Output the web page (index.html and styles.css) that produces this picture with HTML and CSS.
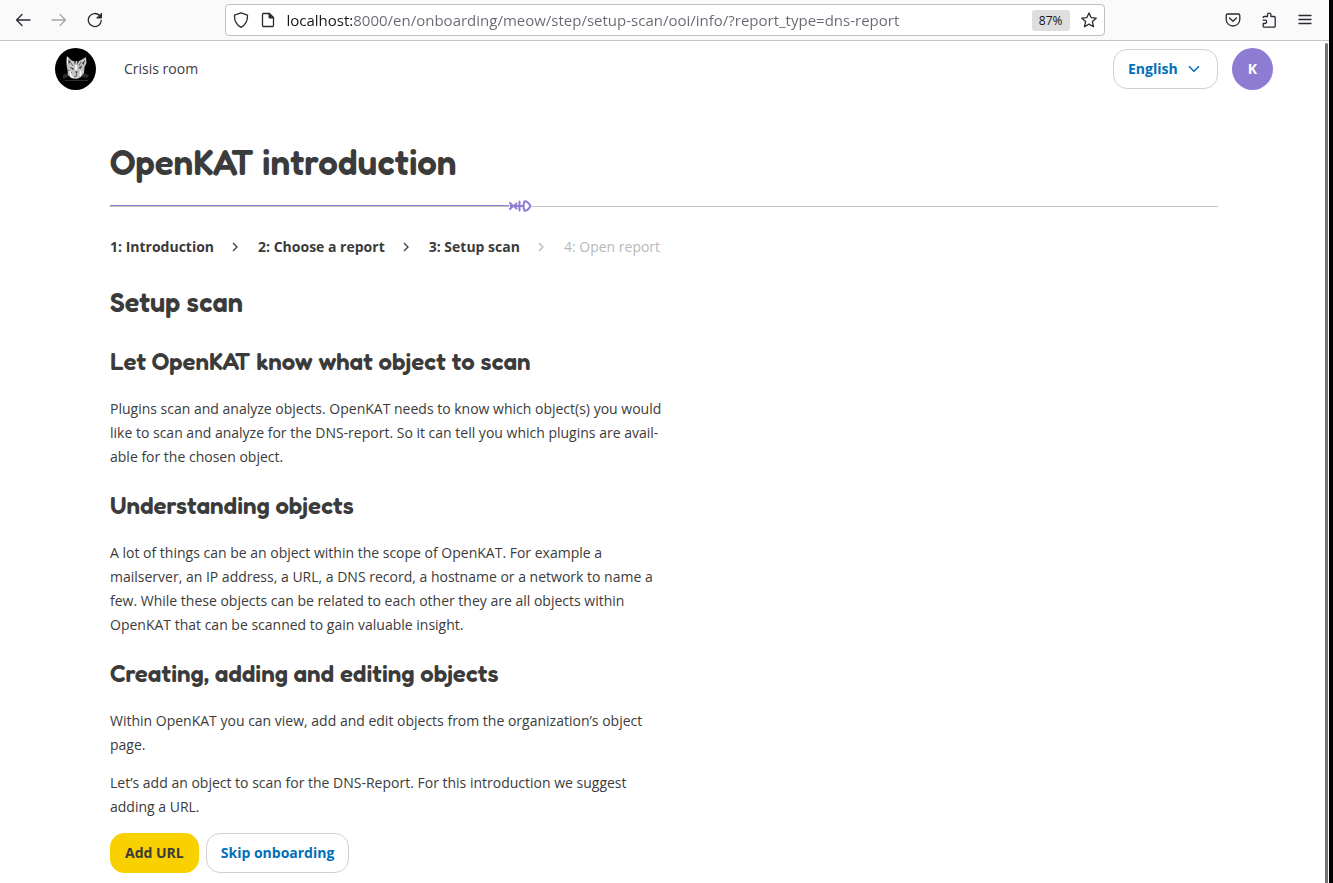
FILE: index.html
```html
<!DOCTYPE html>
<html lang="en">
<head>
<meta charset="utf-8">
<title>OpenKAT introduction</title>
<link rel="stylesheet" href="styles.css">
</head>
<body>
<div class="window">
  <div class="toolbar">
    <div class="nav-buttons">
      <button class="icon-button" aria-label="Back"><svg width="16" height="16" viewBox="0 0 16 16"><path d="M15 8H1.5M7 2.5L1.5 8L7 13.5"/></svg></button>
      <button class="icon-button faded" aria-label="Forward"><svg width="16" height="16" viewBox="0 0 16 16"><path d="M1 8h13.500M9 2.500L14.500 8L9 13.500"/></svg></button>
      <button class="icon-button" aria-label="Reload"><svg width="16" height="16" viewBox="0 0 16 16"><path d="M14.300 8.500A6.500 6.500 0 1 1 12.500 3.500"/><path class="solid" d="M14.500 1.500v4.500H10z"/></svg></button>
    </div>
    <div class="address">
      <svg width="16" height="16" viewBox="0 0 16 16"><path d="M8 .9L14.500 3.200C14.700 8.500 12.500 13 8 15.300C3.500 13 1.300 8.500 1.500 3.200Z"/></svg>
      <svg width="16" height="16" viewBox="0 0 16 16"><path d="M3.500 1.500h6l4 4v8a1 1 0 0 1-1 1h-9a1 1 0 0 1-1-1v-11a1 1 0 0 1 1-1z"/><path class="solid" d="M9 1.500v4.500h4.500z"/></svg>
      <input class="url" type="text" aria-label="Address" value="localhost:8000/en/onboarding/meow/step/setup-scan/ooi/info/?report_type=dns-report">
      <button class="zoom-level">87%</button>
      <button class="icon-button" aria-label="Bookmark"><svg width="16" height="16" viewBox="0 0 16 16"><path d="M8 .9l2.100 4.700 5.100.6-3.800 3.400 1.100 5.100L8 12.100l-4.500 2.600 1.100-5.100L.8 6.200l5.100-.6z"/></svg></button>
    </div>
    <div class="tools">
      <button class="icon-button" aria-label="Save to Pocket"><svg width="16" height="16" viewBox="0 0 16 16"><path d="M2.700 2h10.600a1.500 1.500 0 0 1 1.500 1.500V7.500a6.800 6.500 0 0 1-13.600 0V3.500A1.500 1.500 0 0 1 2.700 2zM4.500 6L8 9.300L11.500 6"/></svg></button>
      <button class="icon-button" aria-label="Extensions"><svg width="16" height="16" viewBox="0 0 16 16"><path d="M2.200 5.500a1 1 0 0 1 1-1H6.500V2.800a1.700 1.700 0 0 1 3.400 0V4.500h3.300a1 1 0 0 1 1 1v8.700a1 1 0 0 1-1 1H3.200a1 1 0 0 1-1-1v-2.700H4a1.600 1.600 0 0 0 0-3.300H2.200"/></svg></button>
      <button class="icon-button" aria-label="Menu"><svg width="16" height="16" viewBox="0 0 16 16"><path d="M2 3.500h12M2 7.500h12M2 11.500h12"/></svg></button>
    </div>
  </div>
  <div class="viewport">
    <div class="page">
      <header class="site-header">
        <a class="logo" href="#" aria-label="OpenKAT home">
          <svg width="41" height="42" viewBox="0 0 41 42">
            <ellipse cx="20.500" cy="21" rx="20.500" ry="21" fill="#000"/>
            <path fill="#2c2c2c" d="M8 27l5-2v4l-5 2zM28 25l6 2-2 3-5-1zM10 32h23v1H10z"/>
            <path fill="#c4c4c4" d="M12 8l4 4 2 1h6l2-1 5-3 .5 6-2 4-.5 6-3 4-4 2-6-1-3-3-.5-5-1-5z"/>
            <path fill="#333" d="M13 11l3 3-2.500 2zM30 12l-3 3 1.500 2zM14.500 19l4.500 1.500-1 1.500zM27.500 17l-4 3 2 1zM20 23.500h3l-1.500 2zM19 13l1 4 1-4zM22 13l.5 4 1.500-4z"/>
            <path stroke="#666" fill="none" d="M21.500 25v3l-3 1M13 22l4 3M16 15l2 3M26 14l-2 4"/>
            <path stroke="#fff" fill="none" stroke-width="1.500" d="M15 23l1 5 3 2M26 23l-1 5M21 17v5M12.500 9.500v6"/>
          </svg>
        </a>
        <nav class="site-nav"><a href="#">Crisis room</a></nav>
        <div class="language">
          <select aria-label="Language"><option>English</option></select>
          <svg width="12" height="8" viewBox="0 0 12 8"><path d="M1 1.200l5 5 5-5"/></svg>
        </div>
        <button class="avatar">K</button>
      </header>
      <main class="content">
        <h1>OpenKAT introduction</h1>
        <div class="progress">
          <span class="progress-done"></span>
          <svg width="23" height="14" viewBox="0 0 23 14"><path d="M1 4L4 7L1 10M7.500 4.500L5 7L7.500 9.500M1.500 7H15M10.500 2.500v9M15.500 2.200c2.300 0 4.500 2 6 4.800c-1.500 2.800-3.700 4.800-6 4.800c-1.300-3-1.300-6.600 0-9.600z"/></svg>
          <span class="progress-rest"></span>
        </div>
        <ol class="steps">
          <li><a href="#">1: Introduction</a><svg width="8" height="10" viewBox="0 0 8 10"><path d="M2 1l4 4-4 4"/></svg></li>
          <li><a href="#">2: Choose a report</a><svg width="8" height="10" viewBox="0 0 8 10"><path d="M2 1l4 4-4 4"/></svg></li>
          <li><a href="#">3: Setup scan</a><svg class="pending" width="8" height="10" viewBox="0 0 8 10"><path d="M2 1l4 4-4 4"/></svg></li>
          <li class="pending">4: Open report</li>
        </ol>
        <h2>Setup scan</h2>
        <section>
          <h3>Let OpenKAT know what object to scan</h3>
          <p>Plugins scan and analyze objects. OpenKAT needs to know which object(s) you would like to scan and analyze for the DNS-report. So it can tell you which plugins are avail&shy;able for the chosen object.</p>
        </section>
        <section>
          <h3>Understanding objects</h3>
          <p>A lot of things can be an object within the scope of OpenKAT. For example a mailserver, an IP address, a URL, a DNS record, a hostname or a network to name a few. While these objects can be related to each other they are all objects within OpenKAT that can be scanned to gain valuable insight.</p>
        </section>
        <section>
          <h3>Creating, adding and editing objects</h3>
          <p>Within OpenKAT you can view, add and edit objects from the organization’s object page.</p>
          <p>Let’s add an object to scan for the DNS-Report. For this introduction we suggest adding a URL.</p>
          <div class="actions">
            <button class="button primary">Add URL</button>
            <button class="button">Skip onboarding</button>
          </div>
        </section>
      </main>
    </div>
    <div class="scrollbar"></div>
  </div>
</div>
</body>
</html>
```
FILE: styles.css
```css
* { box-sizing: border-box; }
body {
  margin: 0;
  background: #000;
  color: #3b3b3b;
  font: 14px/24px "Open Sans", "Noto Sans", sans-serif;
}
button, input, select { font: inherit; color: inherit; }
button { cursor: pointer; }
svg { display: block; flex: none; }
.window {
  display: flex;
  flex-direction: column;
  min-height: 100vh;
  margin-right: 4px;
  background: #fff;
}

.toolbar {
  display: grid;
  grid-template-columns: 1fr 880px 1fr;
  align-items: center;
  padding: 4px 0;
  background: #fafafa;
  border-bottom: 1px solid #c4c4c6;
}
.toolbar svg { fill: none; stroke: #2b2a33; stroke-width: 1.3; stroke-linecap: round; stroke-linejoin: round; }
.toolbar .solid { fill: #2b2a33; stroke-width: 1; }
.icon-button { padding: 0; border: 0; background: none; }
.faded { opacity: .4; }
.nav-buttons { display: flex; gap: 20px; padding-left: 15px; }
.tools { display: flex; justify-content: flex-end; gap: 20px; padding-right: 16px; }
.address {
  display: flex;
  align-items: center;
  gap: 11px;
  height: 32px;
  padding: 0 7px;
  background: #fff;
  border: 1px solid #bfbfc1;
  border-radius: 4px;
}
.url {
  flex: 1;
  min-width: 0;
  padding: 0;
  border: 0;
  background: linear-gradient(90deg, #15141a 65px, #686872 65px);
  background-clip: text;
  -webkit-text-fill-color: transparent;
  font-size: 15px;
  line-height: 20px;
}
.zoom-level {
  padding: 0 7px;
  border: 0;
  border-radius: 3px;
  background: #dedede;
  color: #15141a;
  font-size: 12px;
  line-height: 21px;
}

.viewport { display: flex; flex: 1; }
.page { flex: 1; padding: 7px 52px 10px 55px; }
.scrollbar { width: 3px; margin: 2px 1px 0 0; background: #737373; border-radius: 2px 2px 0 0; }

.site-header { display: flex; align-items: center; }
.site-nav { flex: 1; padding-left: 28px; }
.site-nav a { color: inherit; text-decoration: none; }
.language { display: grid; align-items: center; margin-right: 14px; }
.language select, .language svg { grid-area: 1 / 1; }
.language select {
  appearance: none;
  width: 105px;
  height: 40px;
  padding: 0 14px;
  border: 1px solid #d1d1d1;
  border-radius: 14px;
  background: #fff;
  color: #0070b8;
  font-weight: 700;
}
.language svg { justify-self: end; margin-right: 18px; fill: none; stroke: #0070b8; stroke-width: 1.5; pointer-events: none; }
.avatar {
  width: 41px;
  height: 42px;
  padding: 0;
  border: 0;
  border-radius: 50%;
  background: #8e7cd3;
  color: #fff;
  font-size: 14px;
  font-weight: 700;
}

.content { padding: 52px 55px 0; }
h1, h2, h3 { margin: 0; font-family: "Fredoka", Lato, sans-serif; font-weight: 600; }
h1 { font-size: 35px; line-height: 40px; }
h2 { margin-top: 27px; font-size: 27px; line-height: 32px; }
h3 { margin: 23px 0 21px; font-size: 24px; line-height: 28px; }
h2 + section h3 { margin-top: 30px; }
.progress { display: flex; align-items: center; margin-top: 17px; }
.progress svg { fill: none; stroke: #8e7cd3; stroke-width: 2; stroke-linecap: round; stroke-linejoin: round; }
.progress-done { width: 36%; height: 2px; border-top: 1px solid #8e7cd3; border-bottom: 1px solid #c4c4c4; }
.progress-rest { flex: 1; height: 2px; border-bottom: 1px solid #c4c4c4; }
.steps { display: flex; flex-wrap: wrap; gap: 19px; margin: 22px 0 0; padding: 0; list-style: none; }
.steps li { display: flex; align-items: center; gap: 17px; }
.steps a { color: inherit; font-weight: 700; text-decoration: none; }
.steps svg { fill: none; stroke: #3b3b3b; stroke-width: 1.300; }
.steps .pending { color: #b8b8b8; stroke: #b8b8b8; }
p { max-width: 554px; margin: 0 0 14px; }
section:has(+ section) p { margin-bottom: 0; }
.actions { display: flex; gap: 7px; }
.button {
  height: 40px;
  padding: 0 14px;
  border: 1px solid #d1d1d1;
  border-radius: 14px;
  background: #fff;
  color: #0070b8;
  font-weight: 700;
}
.primary { border-color: #f9d000; background: #f9d000; color: #3b3b3b; }
```
